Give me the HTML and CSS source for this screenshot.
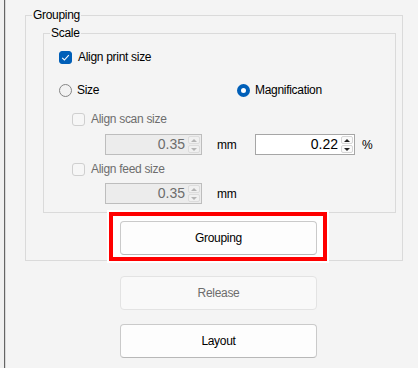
FILE: index.html
```html
<!DOCTYPE html>
<html lang="en">

<head>
    <meta charset="UTF-8">
    <meta name="viewport" content="width=device-width, initial-scale=1.0">
    <title>Grouping</title>
    <link rel="stylesheet" href="styles.css">
</head>

<body>
    <div class="panel">
        <!-- Grouping -->
        <fieldset class="group outer">
            <legend>Grouping</legend>

            <fieldset class="group scale">
                <legend>Scale</legend>
                <div class="rows">
                    <label class="check row-print">
                        <span class="box checked">
                            <svg width="13" height="13" viewBox="0 0 13 13"><polyline points="3.2,6.8 5.4,9 9.8,4.2" fill="none" stroke="#fff" stroke-width="1.1"/></svg>
                        </span>
                        Align print size
                    </label>

                    <div class="radios">
                        <label class="radio"><span class="dot"></span>Size</label>
                        <label class="radio"><span class="dot on"></span>Magnification</label>
                    </div>

                    <label class="check sub disabled row-scan"><span class="box"></span>Align scan size</label>

                    <div class="spinrow row-spin1">
                        <div class="spin disabled">
                            <span class="val">0.35</span>
                            <span class="arrows"><i class="up"></i><i class="down"></i></span>
                        </div>
                        <span class="unit">mm</span>
                        <div class="spin">
                            <span class="val">0.22</span>
                            <span class="arrows"><i class="up"></i><i class="down"></i></span>
                        </div>
                        <span class="pct">%</span>
                    </div>

                    <label class="check sub disabled row-feed"><span class="box"></span>Align feed size</label>

                    <div class="spinrow row-spin2">
                        <div class="spin disabled">
                            <span class="val">0.35</span>
                            <span class="arrows"><i class="up"></i><i class="down"></i></span>
                        </div>
                        <span class="unit">mm</span>
                    </div>
                </div>
            </fieldset>

            <div class="highlight">
                <button class="btn btn-group">Grouping</button>
            </div>
        </fieldset>

        <button class="btn btn-release" disabled>Release</button>
        <button class="btn btn-layout">Layout</button>
    </div>
</body>

</html>
```

FILE: styles.css
```css
* {
    margin: 0;
    padding: 0;
    box-sizing: border-box;
}

body {
    background-color: #f0f0f0;
    font-family: "Liberation Sans", Arial, sans-serif;
    font-size: 12px;
    letter-spacing: -0.3px;
    color: #000;
}

.panel {
    margin-left: 4px;
    height: 368px;
    border-left: 1px solid #646464;
    box-shadow: inset 1px 0 0 #d8d8d8;
    background-color: #f4f4f4;
    display: flex;
    flex-direction: column;
    align-items: flex-start;
}

/* group boxes */
.group {
    border: 1px solid #dadada;
    min-width: 0;
}

.group legend {
    margin-left: 6px;
    padding: 0 1px;
    line-height: 14px;
}

.outer {
    margin: 8px 15px 0 20px;
    align-self: stretch;
    display: flex;
    flex-direction: column;
    align-items: flex-start;
}

.scale {
    margin: 4px 6px 0 17px;
    align-self: stretch;
}

.rows {
    padding: 7px 0 8px 15px;
    display: flex;
    flex-direction: column;
}

/* check boxes & radios */
.check,
.radio {
    height: 20px;
    display: flex;
    align-items: center;
}

.box {
    width: 13px;
    height: 13px;
    margin-right: 6px;
    border: 1px solid #cfcfcf;
    border-radius: 3px;
    background-color: #f6f6f6;
}

.box.checked {
    border-color: #005fb8;
    background-color: #005fb8;
}

.box svg {
    display: block;
    margin: -1px;
}

.sub {
    padding-left: 13px;
}

.disabled {
    color: #6d6d6d;
}

.row-scan {
    margin-top: 9px;
}

.row-feed {
    margin-top: 4px;
}

.radios {
    margin-top: 13px;
    display: grid;
    grid-template-columns: 178px auto;
}

.dot {
    width: 13px;
    height: 13px;
    margin-right: 5px;
    border: 1px solid #858585;
    border-radius: 50%;
    background-color: #f2f2f2;
}

.dot.on {
    border: 4px solid #005fb8;
    background-color: #fff;
}

/* spin boxes */
.spinrow {
    padding-left: 46px;
    display: flex;
    align-items: center;
}

.row-spin1 {
    margin-top: 5px;
}

.row-spin2 {
    margin-top: 4px;
}

.spin {
    width: 97px;
    height: 21px;
    border: 1px solid #a6a6a6;
    background-color: #fff;
    display: flex;
    align-items: stretch;
}

.spinrow .spin + .unit + .spin {
    width: 100px;
}

.spin .val {
    flex: 1;
    padding-right: 3px;
    font-size: 14px;
    line-height: 19px;
    text-align: right;
    letter-spacing: 0;
}

.spin.disabled {
    border-color: #bdbdbd;
    background-color: #ececec;
    color: #6d6d6d;
}

.arrows {
    width: 12px;
    margin: 1px 1px 1px 0;
    display: flex;
    flex-direction: column;
    gap: 1px;
}

.arrows i {
    flex: 1;
    border: 1px solid #d6d6d6;
    border-radius: 2px;
    background-color: #fafafa;
    display: flex;
    align-items: center;
    justify-content: center;
}

.arrows i::after {
    content: "";
    border-left: 3px solid transparent;
    border-right: 3px solid transparent;
}

.arrows .up::after {
    border-bottom: 3px solid #222;
}

.arrows .down::after {
    border-top: 3px solid #222;
}

.spin.disabled .arrows i {
    border-color: #dcdcdc;
    background-color: #f0f0f0;
}

.spin.disabled .up::after {
    border-bottom-color: #b4b4b4;
}

.spin.disabled .down::after {
    border-top-color: #b4b4b4;
}

.unit {
    width: 53px;
    padding-left: 15px;
}

.pct {
    margin-left: 7px;
}

/* buttons */
.btn {
    display: block;
    width: 197px;
    height: 34px;
    border: 1px solid #cacaca;
    border-bottom-color: #b8b8b8;
    border-radius: 4px;
    background-color: #fdfdfd;
    font-family: inherit;
    font-size: 12px;
    letter-spacing: -0.3px;
    color: #000;
}

/* red frame round the Grouping button, laid over the group border */
.highlight {
    margin: -1px 0 -1px 83px;
    padding: 5px 6px 2px 7px;
    border: 4px solid #f00;
    background-color: #fff;
    box-shadow: 0 0 0 2px #fff;
}

.btn-release {
    margin: 15px 0 0 115px;
    border-color: #e3e3e3;
    background-color: #f9f9f9;
    color: #6d6d6d;
}

.btn-layout {
    margin: 14px 0 0 115px;
}
```
